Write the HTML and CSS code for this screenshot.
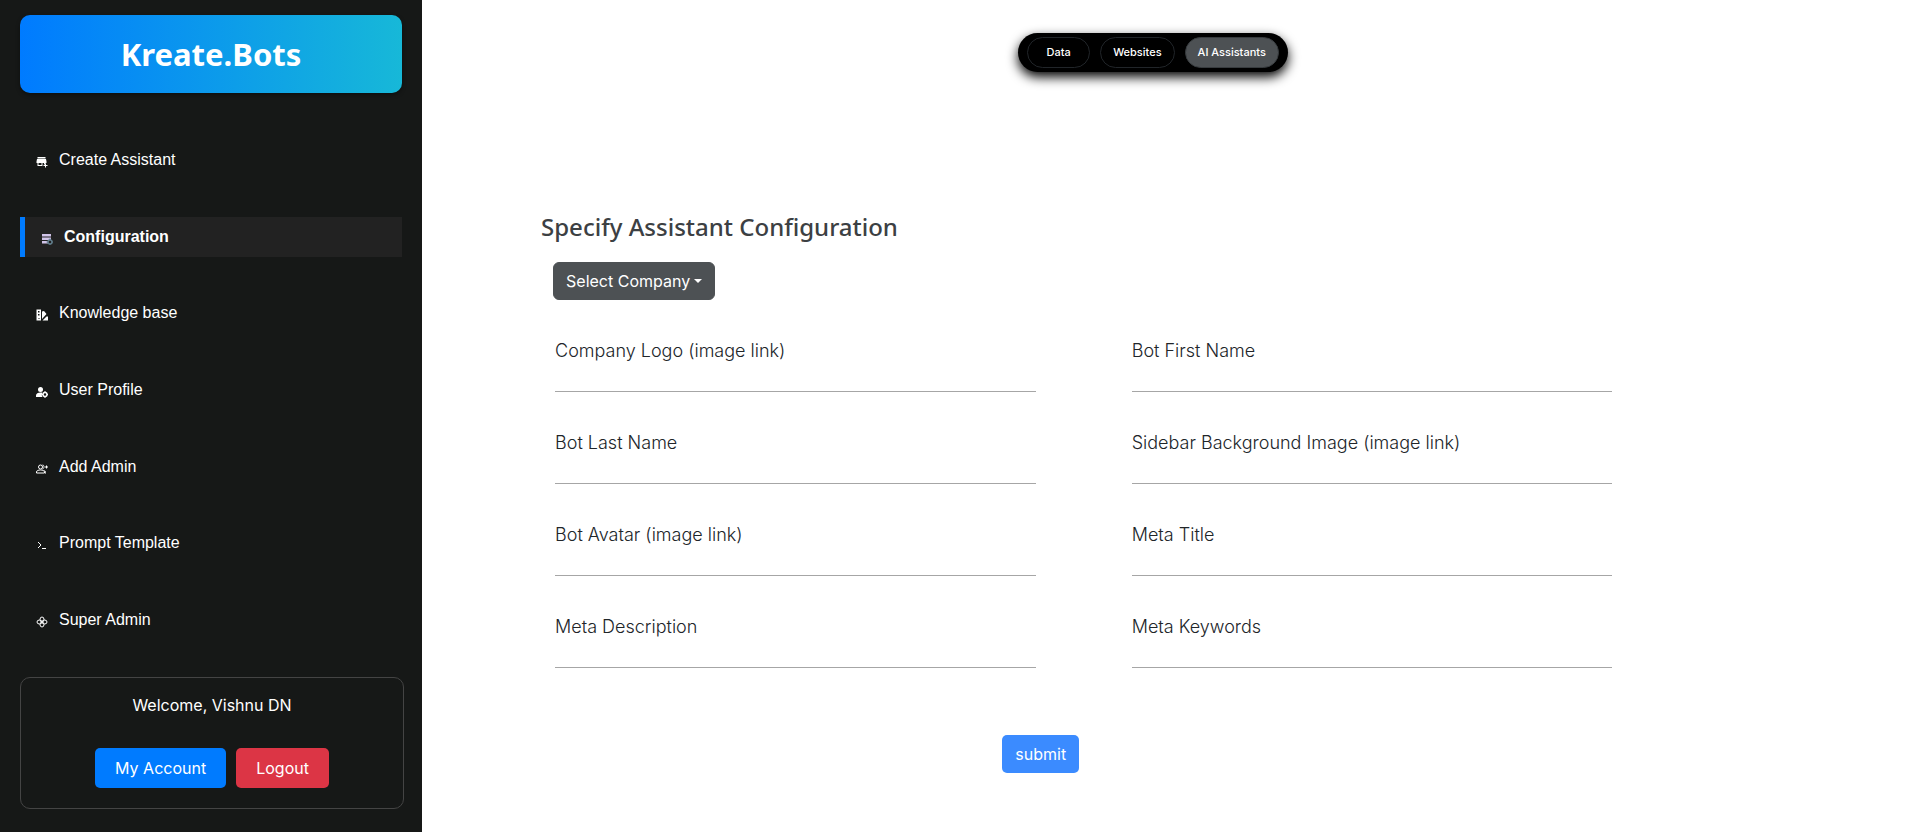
FILE: index.html
```html
<!DOCTYPE html>
<html lang="en">
<head>
<meta charset="utf-8">
<meta name="viewport" content="width=device-width, initial-scale=1">
<title>Kreate.Bots</title>
<link rel="stylesheet" href="styles.css">
</head>
<body>
<div class="layout">
  <aside class="sidebar">
    <div class="brand">Kreate.Bots</div>
    <nav class="menu" aria-label="Main">
      <a class="menu-item" href="#create">
        <svg class="menu-icon" viewBox="0 0 24 24" fill="currentColor" aria-hidden="true"><path d="M3 2h16v3H3zM2 6h18l1 5v3h-2v3h-3v-3h-3v6H3v-6H1v-3zM5 14v4h6v-4z"/><path d="M18 15h2v3h3v2h-3v3h-2v-3h-3v-2h3z"/></svg>
        <span>Create Assistant</span>
      </a>
      <a class="menu-item active" href="#configuration" aria-current="page">
        <svg class="menu-icon" viewBox="0 0 24 24" aria-hidden="true"><path fill="#d1c4e9" d="M2 2h18v5H2zM2 9h18v5H2zM2 16h18v5H2z"/><circle cx="18" cy="18" r="4" fill="#222" stroke="#607d8b" stroke-width="3"/><path fill="#607d8b" d="M17 11h2v3h-2zM17 22h2v2h-2zM11 17h3v2h-3zM22 17h2v2h-2z"/></svg>
        <span>Configuration</span>
      </a>
      <a class="menu-item" href="#knowledge">
        <svg class="menu-icon" viewBox="0 0 24 24" fill="currentColor" fill-rule="evenodd" aria-hidden="true"><path d="M1 1h9v22H1zM4 4v3h3V4zM4 10v3h3v-3zM5 18v2h2v-2z"/><path d="M12 5l4-1 5 6-9 10zM21 15h3v8H13z"/></svg>
        <span>Knowledge base</span>
      </a>
      <a class="menu-item" href="#profile">
        <svg class="menu-icon" viewBox="0 0 24 24" fill="currentColor" aria-hidden="true"><circle cx="9" cy="7" r="5"/><path d="M0 22v-3c0-4 4-6 9-6 2 0 3 0 4 1-2 3-2 5 0 8z"/><circle cx="18" cy="17" r="4" fill="none" stroke="currentColor" stroke-width="3"/><path d="M17 10h2v3h-2zM17 21h2v3h-2zM11 16h3v2h-3zM22 16h2v2h-2z"/></svg>
        <span>User Profile</span>
      </a>
      <a class="menu-item" href="#admin">
        <svg class="menu-icon" viewBox="0 0 24 24" fill="none" stroke="currentColor" stroke-width="2" aria-hidden="true"><circle cx="9" cy="8" r="4"/><path d="M1 20v-2c0-3 4-4 8-4s8 1 8 4v2zM13 4c4 0 4 7 0 8M17 15c2 1 2 3 2 6M21 5v6M18 8h6"/></svg>
        <span>Add Admin</span>
      </a>
      <a class="menu-item" href="#prompt">
        <svg class="menu-icon" viewBox="0 0 24 24" fill="none" stroke="currentColor" stroke-width="2" aria-hidden="true"><path d="M4 6l6 6-6 6M12 19h8"/></svg>
        <span>Prompt Template</span>
      </a>
      <a class="menu-item" href="#super">
        <svg class="menu-icon" viewBox="0 0 24 24" fill="none" stroke="currentColor" stroke-width="2" aria-hidden="true"><ellipse cx="12" cy="7" rx="4" ry="5"/><ellipse cx="12" cy="17" rx="4" ry="5"/><ellipse cx="7" cy="12" rx="5" ry="4"/><ellipse cx="17" cy="12" rx="5" ry="4"/></svg>
        <span>Super Admin</span>
      </a>
    </nav>
    <section class="account">
      <p class="welcome">Welcome, Vishnu DN</p>
      <div class="account-actions">
        <button class="btn btn-account" type="button">My Account</button>
        <button class="btn btn-logout" type="button">Logout</button>
      </div>
    </section>
  </aside>
  <main class="content">
    <div class="tabs">
      <button class="tab" type="button">Data</button>
      <button class="tab" type="button">Websites</button>
      <button class="tab selected" type="button">AI Assistants</button>
    </div>
    <form class="config">
      <h1 class="title">Specify Assistant Configuration</h1>
      <div class="company">
        <select class="company-select" aria-label="Company"><option>Select Company</option></select>
      </div>
      <div class="fields">
        <div class="field"><label for="logo">Company Logo (image link)</label><input id="logo" type="text"></div>
        <div class="field"><label for="first">Bot First Name</label><input id="first" type="text"></div>
        <div class="field"><label for="last">Bot Last Name</label><input id="last" type="text"></div>
        <div class="field"><label for="background">Sidebar Background Image (image link)</label><input id="background" type="text"></div>
        <div class="field"><label for="avatar">Bot Avatar (image link)</label><input id="avatar" type="text"></div>
        <div class="field"><label for="meta-title">Meta Title</label><input id="meta-title" type="text"></div>
        <div class="field"><label for="meta-description">Meta Description</label><input id="meta-description" type="text"></div>
        <div class="field"><label for="meta-keywords">Meta Keywords</label><input id="meta-keywords" type="text"></div>
      </div>
      <button class="submit" type="submit">submit</button>
    </form>
  </main>
</div>
</body>
</html>
```
FILE: styles.css
```css
* {
  box-sizing: border-box;
}

body {
  margin: 0;
  background: #fff;
  color: #212529;
  font: 16px/24px Inter, sans-serif;
}

button,
input,
select {
  font: inherit;
}

.layout {
  display: flex;
  min-height: 100vh;
}

.sidebar {
  display: flex;
  flex-direction: column;
  flex: 0 0 422px;
  padding: 15px 20px 23px;
  background: #161817;
  color: #fff;
}

.brand {
  padding: 19px;
  border-radius: 10px;
  background: linear-gradient(90deg, #007bff, #17b8d8);
  box-shadow: 0 2px 4px rgba(0, 0, 0, 0.4);
  font: 700 31px/40px "Noto Sans", sans-serif;
  text-align: center;
}

.menu {
  display: flex;
  flex: 1;
  flex-direction: column;
  justify-content: space-between;
  padding: 47px 0 37px;
}

.menu-item {
  display: flex;
  align-items: center;
  gap: 11px;
  padding: 8px 16px;
  color: #fff;
  font-family: "Liberation Sans", Arial, sans-serif;
  text-decoration: none;
}

.menu-item.active {
  border-left: 5px solid #007bff;
  background: #222;
  font-weight: 700;
}

.menu-icon {
  width: 12px;
  height: 12px;
  margin-top: 4px;
}

.account {
  margin-right: -2px;
  padding: 15px 20px 20px;
  border: 1px solid #444;
  border-radius: 10px;
  text-align: center;
}

.welcome {
  margin: 0 0 31px;
}

.account-actions {
  display: flex;
  justify-content: center;
  gap: 10px;
}

.btn {
  padding: 8px 20px;
  border: 0;
  border-radius: 5px;
  color: #fff;
}

.btn-account {
  background: #007bff;
}

.btn-logout {
  background: #dc3545;
}

.content {
  display: flex;
  flex: 1;
  flex-direction: column;
  padding: 33px 0 56px;
}

.tabs {
  display: flex;
  align-self: center;
  gap: 10px;
  margin-right: 26px;
  padding: 4px 9px;
  border-radius: 20px;
  background: #000;
  box-shadow: 0 5px 12px #000;
}

.tab {
  min-width: 63px;
  padding: 6px 12px 7px;
  border: 1px solid #212529;
  border-radius: 16px;
  background: #000;
  color: #fff;
  font-size: 11px;
  line-height: 16px;
  font-weight: 500;
}

.tab.selected {
  background: #4d5154;
  border-color: #373b3e;
}

.config {
  display: flex;
  flex-direction: column;
  align-items: flex-start;
  width: 72%;
  margin: 139px 0 0 8%;
}

.title {
  margin: 0;
  color: #3c4043;
  font: 500 24px/32px "Noto Sans", sans-serif;
}

.company {
  position: relative;
  margin: 19px 0 39px 12px;
}

.company::after {
  position: absolute;
  top: 17px;
  right: 13px;
  border: 4px solid transparent;
  border-top-color: #fff;
  border-bottom: 0;
  content: "";
  pointer-events: none;
}

.company-select {
  padding: 6px 23px 6px 12px;
  border: 1px solid #4d5154;
  border-radius: 6px;
  appearance: none;
  background: #4d5154;
  color: #fff;
  line-height: 24px;
}

.fields {
  display: grid;
  grid-template-columns: 1fr 1fr;
  column-gap: 96px;
  row-gap: 39px;
  align-self: stretch;
  margin-left: 14px;
}

.field {
  display: flex;
  flex-direction: column;
}

.field label {
  font-size: 18px;
  font-weight: 300;
}

.field input {
  width: 100%;
  height: 29px;
  padding: 0;
  border: 0;
  border-bottom: 1px solid #a6a6a6;
  outline: 0;
  background: transparent;
}

.submit {
  align-self: center;
  margin: 67px 72px 0 0;
  padding: 7px 13px;
  border: 0;
  border-radius: 5px;
  background: #3b8bff;
  color: #fff;
}
```
